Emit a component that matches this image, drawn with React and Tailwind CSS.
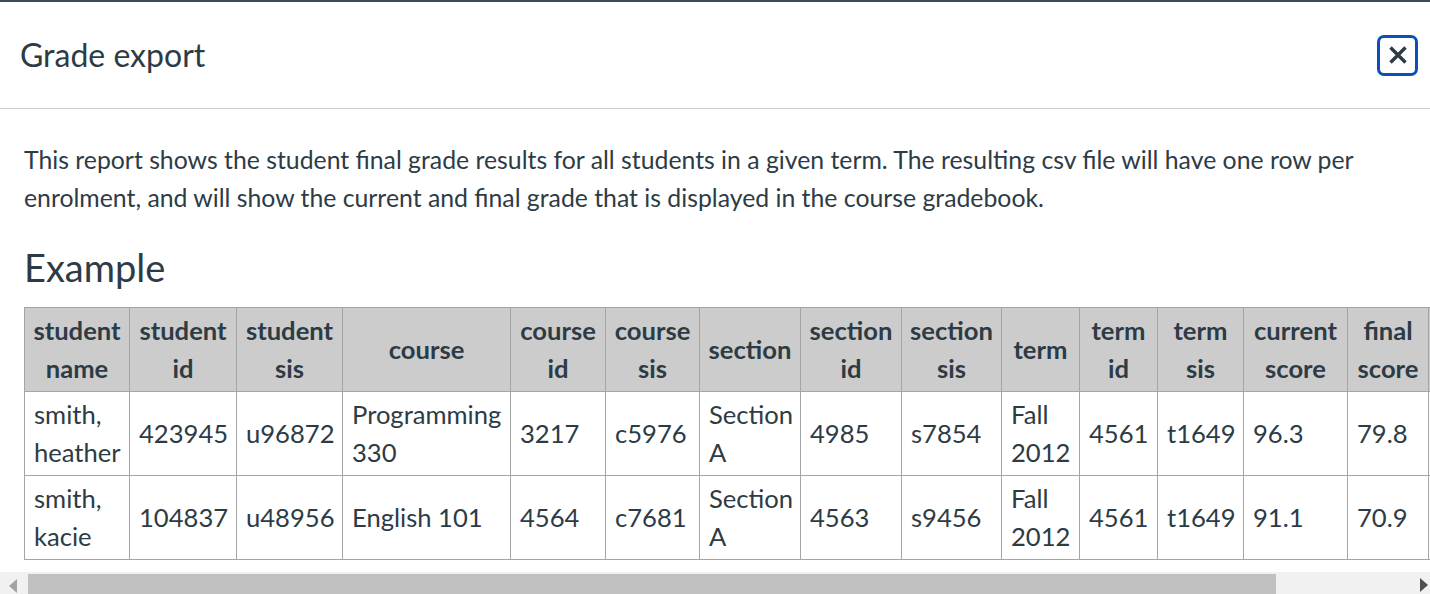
import React from "react";

const columns = [
  { label: ["student", "name"], w: 105 },
  { label: ["student", "id"], w: 107 },
  { label: ["student", "sis"], w: 106 },
  { label: ["course"], w: 168 },
  { label: ["course", "id"], w: 95 },
  { label: ["course", "sis"], w: 94 },
  { label: ["section"], w: 101 },
  { label: ["section", "id"], w: 101 },
  { label: ["section", "sis"], w: 100 },
  { label: ["term"], w: 78 },
  { label: ["term", "id"], w: 78 },
  { label: ["term", "sis"], w: 86 },
  { label: ["current", "score"], w: 104 },
  { label: ["final", "score"], w: 81 },
  { label: ["enrollment", "state"], w: 150 },
];

const rows = [
  ["smith, heather", "423945", "u96872", "Programming 330", "3217", "c5976", "Section A", "4985", "s7854", "Fall 2012", "4561", "t1649", "96.3", "79.8", "active"],
  ["smith, kacie", "104837", "u48956", "English 101", "4564", "c7681", "Section A", "4563", "s9456", "Fall 2012", "4561", "t1649", "91.1", "70.9", "active"],
];

function CloseButton() {
  return (
    <button className="mr-3 flex h-[41px] w-[41px] items-center justify-center rounded-[7px] border-[3px] border-[#0b4fb8] bg-white">
      <svg width="18" height="18" viewBox="0 0 18 18">
        <path d="M1.5 1.5 L16.5 16.5 M16.5 1.5 L1.5 16.5" stroke="#2d3b45" strokeWidth="3.4" strokeLinecap="butt" />
      </svg>
    </button>
  );
}

function FakeScrollbar() {
  return (
    <div className="relative h-[26px] w-full bg-[#f1f1f1]">
      <div className="absolute left-[9px] top-[7px]">
        <svg width="8" height="14" viewBox="0 0 8 14">
          <path d="M8 0 L0 7 L8 14 Z" fill="#a3a3a3" />
        </svg>
      </div>
      <div className="absolute left-[28px] top-[2px] h-[22px] w-[1248px] bg-[#c1c1c1]" />
      <div className="absolute right-[2px] top-[6px]">
        <svg width="8" height="14" viewBox="0 0 8 14">
          <path d="M0 0 L8 7 L0 14 Z" fill="#505050" />
        </svg>
      </div>
    </div>
  );
}

export default function App() {
  return (
    <div
      className="h-[594px] w-full overflow-hidden bg-white text-[#2d3b45]"
      style={{ fontFamily: "Lato, 'Noto Sans', sans-serif" }}
    >
      <div className="flex h-[109px] items-center justify-between border-t-2 border-b border-t-[#394b58] border-b-[#c7cdd1]">
        <h2 className="pl-5 text-[32px] font-normal leading-none">Grade export</h2>
        <CloseButton />
      </div>

      <div className="px-6 pt-8">
        <p className="text-[24.8px] leading-[38.4px]">
          This report shows the student final grade results for all students in a given term. The resulting csv file will have one row per enrolment, and will show the current and final grade that is displayed in the course gradebook.
        </p>
        <h3 className="mt-[26px] text-[38px] font-normal leading-[46px]">Example</h3>
      </div>

      <div className="mt-[17px] w-full overflow-hidden">
        <div className="px-6 pb-[12px]">
          <table className="table-fixed border-collapse text-[25.6px] leading-[38px]" style={{ width: 1554 }}>
            <colgroup>
              {columns.map((c, i) => (
                <col key={i} style={{ width: c.w }} />
              ))}
            </colgroup>
            <thead>
              <tr className="h-[84px]">
                {columns.map((c, i) => (
                  <th
                    key={i}
                    className="border border-[#a5a5a5] bg-[#cccccc] px-0.5 text-center align-middle font-bold"
                  >
                    {c.label.map((l, j) => (
                      <div key={j}>{l}</div>
                    ))}
                  </th>
                ))}
              </tr>
            </thead>
            <tbody>
              {rows.map((r, ri) => (
                <tr key={ri} className="h-[84px]">
                  {r.map((v, ci) => (
                    <td key={ci} className="border border-[#a5a5a5] px-[9px] text-left align-middle">
                      {v}
                    </td>
                  ))}
                </tr>
              ))}
            </tbody>
          </table>
        </div>
        <FakeScrollbar />
      </div>
    </div>
  );
}
